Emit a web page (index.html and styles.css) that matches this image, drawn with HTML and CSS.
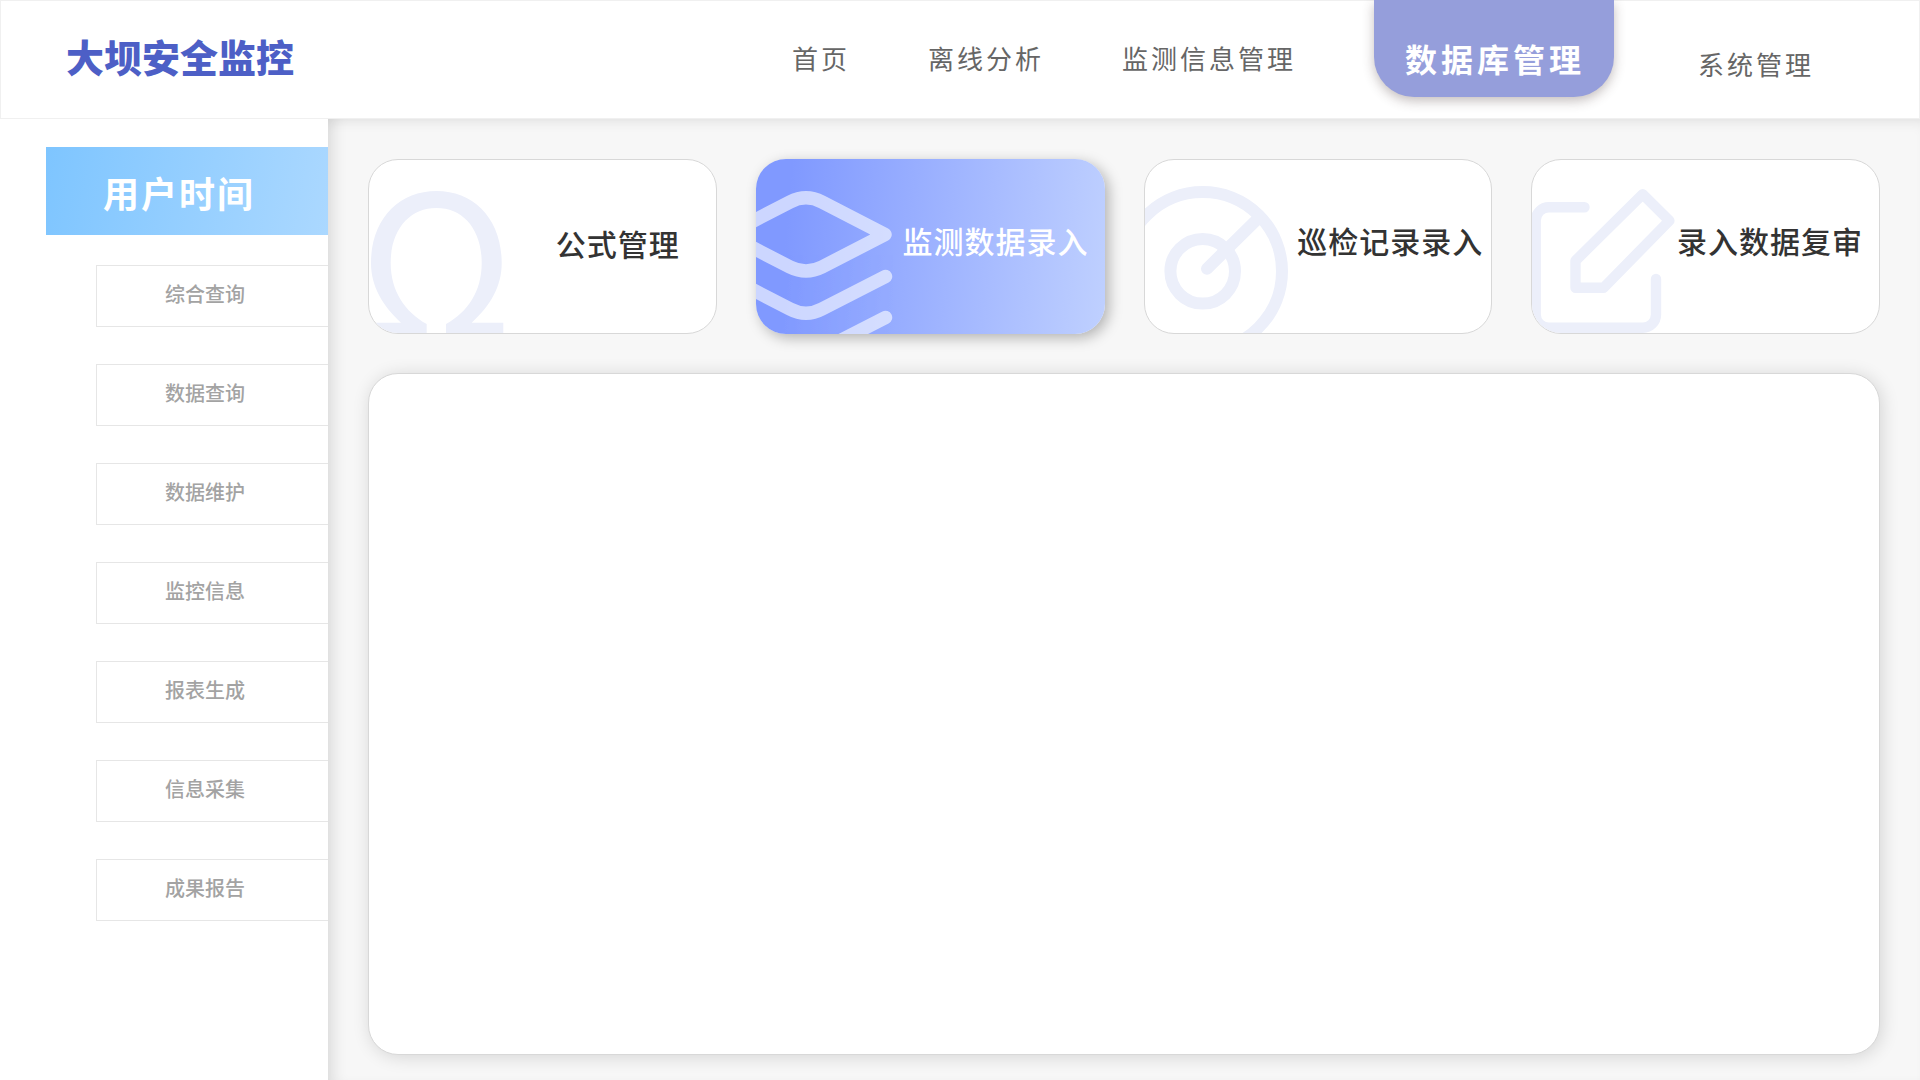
FILE: index.html
```html
<!DOCTYPE html>
<html lang="zh-CN">
<head>
  <meta charset="UTF-8">
  <meta name="viewport" content="width=device-width, initial-scale=1">
  <title>大坝安全监控</title>
  <link rel="stylesheet" href="styles.css">
</head>

<body>

  <header class="header">
    <h1 class="logo">大坝安全监控</h1>
    <nav class="nav">
      <a class="nav-link" href="#">首页</a>
      <a class="nav-link" href="#">离线分析</a>
      <a class="nav-link" href="#">监测信息管理</a>
      <a class="nav-link nav-active" href="#">数据库管理</a>
      <a class="nav-link nav-system" href="#">系统管理</a>
    </nav>
  </header>

  <div class="layout">
    <aside class="sidebar">
      <h2 class="sidebar-title">用户时间</h2>
      <nav class="side-menu">
        <a class="side-link" href="#">综合查询</a>
        <a class="side-link" href="#">数据查询</a>
        <a class="side-link" href="#">数据维护</a>
        <a class="side-link" href="#">监控信息</a>
        <a class="side-link" href="#">报表生成</a>
        <a class="side-link" href="#">信息采集</a>
        <a class="side-link" href="#">成果报告</a>
      </nav>
    </aside>

    <main class="main">
      <div class="cards">
        <a class="card card-formula" href="#">
          <svg class="card-icon" viewBox="1 1 140 173" aria-hidden="true">
            <path fill="currentColor" d="M135.3 180V163.7H103.7C122 147 133.7 128 133.7 104C133.7 60 106 32 68.5 32C31 32 3 60 3 104C3 128 15 147 33 163.7H1.5V180H58.7V165C37 153 22.7 132 22.7 104C22.7 70 42 49 68.5 49C95 49 113.7 70 113.7 104C113.7 132 100 153 78 165V180Z"/>
          </svg>
          <span class="card-title">公式管理</span>
        </a>

        <a class="card card-active" href="#">
          <svg class="card-icon" viewBox="0 0 140 175" aria-hidden="true">
            <g fill="none" stroke="currentColor" stroke-width="13.5" stroke-linecap="round" stroke-linejoin="round">
              <path d="M129 75.5L66 43Q50 34.5 34 43L-29 75.5L34 108Q50 116 66 108Z"/>
              <path d="M129.5 117.5L66 150Q50 158.5 34 150L-29 117.5"/>
              <path d="M129.5 158.5L66 191Q50 199.5 34 191L-29 158.5"/>
            </g>
          </svg>
          <span class="card-title">监测数据录入</span>
        </a>

        <a class="card card-patrol" href="#">
          <svg class="card-icon" viewBox="1 1 140 173" aria-hidden="true">
            <g fill="none" stroke="currentColor" stroke-width="12" stroke-linecap="round">
              <circle cx="58.7" cy="112.3" r="79.3"/>
              <circle cx="58.7" cy="112.3" r="32.3"/>
              <path d="M63 109.7L113 60.5"/>
            </g>
          </svg>
          <span class="card-title">巡检记录录入</span>
        </a>

        <a class="card" href="#">
          <svg class="card-icon" viewBox="1 1 140 173" aria-hidden="true">
            <g fill="none" stroke="currentColor" stroke-width="10.4" stroke-linecap="round" stroke-linejoin="round">
              <path d="M53.5 48.2H18A13.3 13.3 0 0 0 4.7 61.5V155.5A13.3 13.3 0 0 0 18 168.8H111.7A13.3 13.3 0 0 0 125 155.5V120"/>
              <path d="M111.7 35.3L138.4 61.7L72.5 128.8H44.5V101.7Z"/>
            </g>
          </svg>
          <span class="card-title">录入数据复审</span>
        </a>
      </div>

      <section class="panel"></section>
    </main>
  </div>

</body>
</html>
```
FILE: styles.css
```css
:root {
  --logo-color: #4d5fc6;
  --tab-color: #959edb;
  --bg-color: #f7f7f7;
  --card-border: #d8d8d8;
  --icon-color: #eceffa;
}

* { margin: 0; padding: 0; box-sizing: border-box; }

body {
  font-family: "Noto Sans CJK SC", sans-serif;
  background: white;
  min-height: 100vh;
  display: flex;
  flex-direction: column;
}

a {
  color: inherit;
  text-decoration: none;
}

.header {
  display: flex;
  justify-content: space-between;
  height: 119px;
  padding: 0 106px 0 66px;
  background: white;
  box-shadow: inset 0 0 0 1px #f0f0f0;
}

.logo {
  align-self: center;
  font-size: 38px;
  font-weight: 900;
  line-height: 48px;
  padding-bottom: 8px;
  color: var(--logo-color);
}

.nav {
  display: flex;
  align-items: center;
  gap: 78px;
}

.nav-link {
  padding-bottom: 4px;
  font-size: 26px;
  letter-spacing: 3px;
  line-height: 40px;
  color: #666;
}

.nav-active {
  align-self: flex-start;
  width: 240px;
  height: 97px;
  padding: 38px 0 0 2px;
  text-align: center;
  font-size: 32px;
  font-weight: bold;
  letter-spacing: 4px;
  color: white;
  background: var(--tab-color);
  border-radius: 0 0 40px 40px;
  box-shadow: 0 4px 12px rgba(60, 40, 40, 0.3);
}

.nav-system {
  margin: 12px 0 0 6px;
}

.layout {
  display: flex;
  flex: 1;
}

.sidebar {
  width: 328px;
  padding: 28px 0 28px 46px;
  background: white;
}

.sidebar-title {
  height: 88px;
  padding-left: 57px;
  font-size: 36px;
  letter-spacing: 2px;
  line-height: 90px;
  color: white;
  background: linear-gradient(100deg, #7ec5ff, #abd8ff);
}

.side-menu {
  display: flex;
  flex-direction: column;
  gap: 37px;
  padding: 30px 0 0 50px;
}

.side-link {
  height: 62px;
  padding-left: 68px;
  border: 1px solid #e6e6e6;
  border-right: none;
  font-size: 20px;
  font-weight: 500;
  line-height: 56px;
  color: #a3a3a3;
}

.main {
  flex: 1;
  display: flex;
  flex-direction: column;
  gap: 39px;
  padding: 40px 40px 25px;
  background: var(--bg-color);
  box-shadow: inset 14px 0 14px -8px rgba(0, 0, 0, 0.1), inset 0 10px 12px -6px rgba(0, 0, 0, 0.07);
}

.cards {
  display: grid;
  grid-template-columns: repeat(4, 1fr);
  gap: 39px;
}

.card {
  display: flex;
  align-items: center;
  justify-content: space-between;
  height: 175px;
  padding-right: 16px;
  overflow: hidden;
  color: #333;
  background: white;
  border: 1px solid var(--card-border);
  border-radius: 30px;
}

.card-formula {
  padding-right: 36px;
}

.card-patrol {
  padding-right: 8px;
}

.card-active {
  color: white;
  background: linear-gradient(95deg, #8099ff 10%, #bfd0ff);
  border: none;
  box-shadow: 4px 4px 14px rgba(0, 0, 0, 0.28);
}

.card-icon {
  flex: none;
  width: 140px;
  height: 100%;
  overflow: visible;
  color: var(--icon-color);
}

.card-active .card-icon {
  color: white;
  opacity: 0.6;
}

.card-title {
  padding-bottom: 14px;
  font-size: 30px;
  font-weight: 500;
  letter-spacing: 1px;
  white-space: nowrap;
}

.card-formula .card-title {
  padding-bottom: 8px;
}

.panel {
  flex: 1;
  background: white;
  border: 1px solid var(--card-border);
  border-radius: 30px;
  box-shadow: 2px 2px 18px rgba(0, 0, 0, 0.14);
}
```
